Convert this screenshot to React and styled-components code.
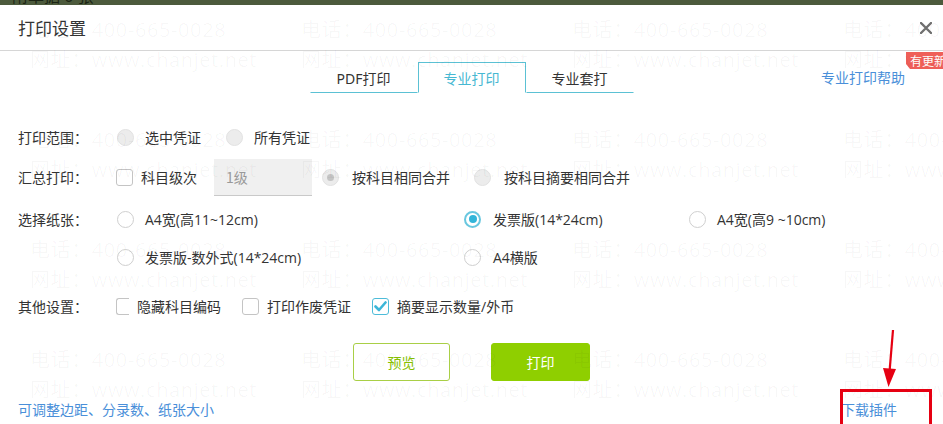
import React from 'react';
import styled, { createGlobalStyle } from 'styled-components';

const Global = createGlobalStyle`
  html, body { margin: 0; padding: 0; width: 943px; height: 424px; overflow: hidden; background: #fff; }
  body { font-family: "Noto Sans", "Noto Sans CJK SC", sans-serif; color: #333; }
  * { box-sizing: border-box; }
`;

const Page = styled.div`
  position: relative;
  width: 943px;
  height: 424px;
  overflow: hidden;
  background: #fff;
  display: flex;
  flex-direction: column;
`;

const TopBar = styled.div`
  height: 5px;
  flex: none;
  background: #4c5a3c;
  overflow: hidden;
  padding-left: 12px;
  span {
    display: block;
    margin-top: -13px;
    font-size: 16px;
    line-height: 18px;
    color: #1b2414;
  }
`;

const Header = styled.div`
  height: 46px;
  flex: none;
  display: flex;
  align-items: center;
  justify-content: space-between;
  padding: 0 11px 0 18px;
  border-bottom: 1px solid #d6d6d6;
`;

const Title = styled.div`
  font-size: 17px;
  color: #333;
  font-family: "Noto Sans CJK SC", sans-serif;
`;

const Close = styled.svg`
  width: 12px;
  height: 12px;
`;

const TabsRow = styled.div`
  margin-top: 11px;
  display: grid;
  grid-template-columns: 1fr auto 1fr;
`;

const Tabs = styled.div`
  grid-column: 2;
  display: flex;
`;

const Tab = styled.div`
  width: 108px;
  height: 31px;
  display: flex;
  align-items: center;
  justify-content: center;
  font-size: 14px;
  color: ${p => (p.$active ? '#46b8d2' : '#333')};
  border: 1px solid ${p => (p.$active ? '#5bc1d4' : 'transparent')};
  border-bottom: 1px solid ${p => (p.$active ? 'transparent' : '#5bc1d4')};
`;

const HelpWrap = styled.div`
  grid-column: 3;
  justify-self: end;
  align-self: end;
  margin: 0 38px 5px 0;
  position: relative;
`;

const Link = styled.span`
  font-size: 14px;
  line-height: 20px;
  color: #4a8fd9;
  font-family: "Noto Sans CJK SC", sans-serif;
`;

const Badge = styled.span`
  position: absolute;
  left: calc(100% + 1px);
  top: -14px;
  height: 17px;
  padding: 0 5px 0 4px;
  background: #ef5f58;
  color: #fff;
  font-size: 12px;
  line-height: 17px;
  white-space: nowrap;
  clip-path: polygon(0 0, 100% 0, 100% 100%, 4px 100%, 0 70%);
  font-family: "Noto Sans CJK SC", sans-serif;
`;

const Form = styled.div`
  display: flex;
  flex-direction: column;
  padding-left: 18px;
`;

const Row = styled.div`
  display: flex;
  align-items: center;
  height: 38px;
  margin-top: ${p => p.$mt || 0}px;
  font-size: 14px;
  font-family: "Noto Sans CJK SC", sans-serif;
`;

const Label = styled.div`
  width: 98px;
  flex: none;
  color: #333;
`;

const Controls = styled.div`
  display: flex;
  align-items: center;
`;

const PaperGrid = styled.div`
  display: grid;
  grid-template-columns: 347px 225px auto;
  padding-left: 1px;
  align-items: center;
`;

const Option = styled.label`
  display: flex;
  align-items: center;
  gap: ${p => (p.$gap != null ? p.$gap : 11)}px;
  margin-left: ${p => p.$ml || 0}px;
  color: #333;
  white-space: nowrap;
  font-family: "Open Sans", "Noto Sans CJK SC", sans-serif;
`;

const RadioDot = styled.span`
  width: 17px;
  height: 17px;
  flex: none;
  border-radius: 50%;
  display: flex;
  align-items: center;
  justify-content: center;
  background: ${p => (p.$disabled ? '#ececec' : '#fff')};
  border: ${p =>
    p.$checked && !p.$disabled
      ? '2px solid #69c7df'
      : p.$disabled
      ? '1px solid #e2e2e2'
      : '1px solid #cfcfcf'};
  &::after {
    content: '';
    display: ${p => (p.$checked ? 'block' : 'none')};
    width: ${p => (p.$disabled ? 7 : 8)}px;
    height: ${p => (p.$disabled ? 7 : 8)}px;
    border-radius: 50%;
    background: ${p => (p.$disabled ? '#c4c4c4' : '#33b5d9')};
  }
`;

const Box = styled.span`
  width: ${p => (p.$clipped ? 13 : 17)}px;
  height: 17px;
  flex: none;
  border: 1px solid ${p => (p.$checked ? '#4dbcd9' : '#c4c4c4')};
  border-right: ${p => (p.$clipped ? 'none' : undefined)};
  border-radius: ${p => (p.$clipped ? '3px 0 0 3px' : '3px')};
  background: #fff;
  display: flex;
  align-items: center;
  justify-content: center;
`;

const LevelInput = styled.div`
  width: 98px;
  height: 37px;
  margin-left: 17px;
  background: #f0f0f0;
  border-bottom: 1px solid #c9c9c9;
  color: #999;
  display: flex;
  align-items: center;
  padding-left: 12px;
`;

const Buttons = styled.div`
  margin-top: 18px;
  display: flex;
  justify-content: center;
  gap: 41px;
`;

const Button = styled.button`
  width: ${p => (p.$primary ? 99 : 97)}px;
  height: 38px;
  border-radius: 3px;
  font-size: 14px;
  font-family: "Noto Sans CJK SC", sans-serif;
  cursor: pointer;
  border: 1px solid ${p => (p.$primary ? '#8fcf00' : '#a9cf46')};
  background: ${p => (p.$primary ? '#8fcf00' : 'transparent')};
  color: ${p => (p.$primary ? '#fff' : '#86c000')};
`;

const Footer = styled.div`
  margin-top: 18px;
  display: flex;
  justify-content: space-between;
  padding: 0 46px 0 18px;
`;

const Watermark = styled.div`
  position: absolute;
  inset: 0;
  pointer-events: none;
  z-index: 5;
  display: grid;
  grid-template-columns: repeat(4, 271px);
  grid-auto-rows: 110px;
  padding: 15px 0 0 30px;
  overflow: hidden;
`;

const WMTile = styled.div`
  font-family: "Open Sans", "Noto Sans CJK SC", sans-serif;
  font-size: 20px;
  line-height: 30px;
  letter-spacing: 0.6px;
  color: rgba(0, 0, 0, 0.035);
  white-space: nowrap;
`;

const RedBox = styled.div`
  position: absolute;
  left: 840px;
  top: 389px;
  width: 92px;
  height: 42px;
  border: 3px solid #e60012;
  pointer-events: none;
  z-index: 6;
`;

const Arrow = styled.svg`
  position: absolute;
  left: 878px;
  top: 328px;
  width: 24px;
  height: 62px;
  z-index: 6;
  pointer-events: none;
`;

const Check = () => (
  <svg width="13" height="11" viewBox="0 0 13 11">
    <path d="M1.5 5.5 L5 9 L11.5 1.5" fill="none" stroke="#3cb6d8" strokeWidth="2.6" strokeLinecap="round" strokeLinejoin="round" />
  </svg>
);

export default function App() {
  const tiles = Array.from({ length: 16 });
  return (
    <>
      <Global />
      <Page>
        <TopBar><span>附单据 0 张</span></TopBar>
        <Header>
          <Title>打印设置</Title>
          <Close viewBox="0 0 12 12">
            <path d="M1 1 L11 11 M11 1 L1 11" stroke="#707070" strokeWidth="2.4" strokeLinecap="round" />
          </Close>
        </Header>
        <TabsRow>
          <Tabs>
            <Tab>PDF打印</Tab>
            <Tab $active>专业打印</Tab>
            <Tab>专业套打</Tab>
          </Tabs>
          <HelpWrap>
            <Link>专业打印帮助</Link>
            <Badge>有更新</Badge>
          </HelpWrap>
        </TabsRow>
        <Form>
          <Row $mt={25}>
            <Label>打印范围：</Label>
            <Controls>
              <Option $ml={1}><RadioDot $disabled />选中凭证</Option>
              <Option $ml={25}><RadioDot $disabled />所有凭证</Option>
            </Controls>
          </Row>
          <Row $mt={2}>
            <Label>汇总打印：</Label>
            <Controls>
              <Option $gap={8}><Box />科目级次</Option>
              <LevelInput>1级</LevelInput>
              <Option $ml={10} $gap={13}><RadioDot $disabled $checked />按科目相同合并</Option>
              <Option $ml={24} $gap={13}><RadioDot $disabled />按科目摘要相同合并</Option>
            </Controls>
          </Row>
          <Row $mt={4}>
            <Label>选择纸张：</Label>
            <PaperGrid>
              <Option><RadioDot />A4宽(高11~12cm)</Option>
              <Option $gap={12}><RadioDot $checked />发票版(14*24cm)</Option>
              <Option><RadioDot />A4宽(高9 ~10cm)</Option>
            </PaperGrid>
          </Row>
          <Row>
            <Label />
            <PaperGrid>
              <Option><RadioDot />发票版-数外式(14*24cm)</Option>
              <Option $gap={12}><RadioDot />A4横版</Option>
            </PaperGrid>
          </Row>
          <Row $mt={11}>
            <Label>其他设置：</Label>
            <Controls>
              <Option $gap={8}><Box $clipped />隐藏科目编码</Option>
              <Option $ml={21} $gap={8}><Box />打印作废凭证</Option>
              <Option $ml={21} $gap={8}><Box $checked><Check /></Box>摘要显示数量/外币</Option>
            </Controls>
          </Row>
        </Form>
        <Buttons>
          <Button>预览</Button>
          <Button $primary>打印</Button>
        </Buttons>
        <Footer>
          <Link>可调整边距、分录数、纸张大小</Link>
          <Link>下载插件</Link>
        </Footer>
        <Watermark>
          {tiles.map((_, i) => (
            <WMTile key={i}>
              <div>电话：400-665-0028</div>
              <div>网址：www.chanjet.net</div>
            </WMTile>
          ))}
        </Watermark>
        <RedBox />
        <Arrow viewBox="0 0 24 62">
          <path d="M15 2 L11.5 44" stroke="#e60012" strokeWidth="2.2" />
          <path d="M5 40 L18 41 L10.5 59 Z" fill="#e60012" />
        </Arrow>
      </Page>
    </>
  );
}
